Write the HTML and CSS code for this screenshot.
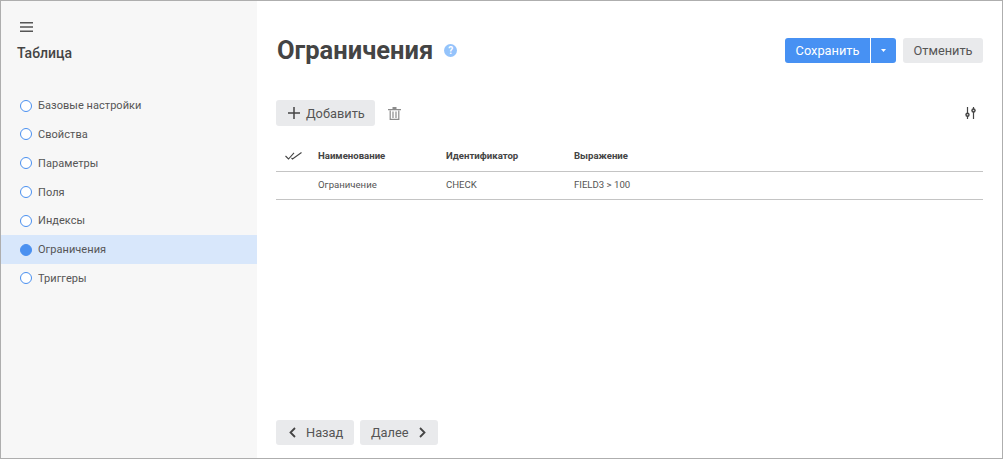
FILE: index.html
```html
<!DOCTYPE html>
<html lang="ru">
<head>
<meta charset="utf-8">
<title>Ограничения</title>
<link rel="stylesheet" href="styles.css">
</head>
<body>
<div class="window">
  <aside class="sidebar">
    <svg class="menu-icon" width="13" height="10" viewBox="0 0 13 10"><path d="M0 .7h13M0 5h13M0 9.300h13" stroke="#555" stroke-width="1.400" fill="none"/></svg>
    <div class="side-title">Таблица</div>
    <nav class="steps">
      <div class="step"><span class="dot"></span>Базовые настройки</div>
      <div class="step"><span class="dot"></span>Свойства</div>
      <div class="step"><span class="dot"></span>Параметры</div>
      <div class="step"><span class="dot"></span>Поля</div>
      <div class="step"><span class="dot"></span>Индексы</div>
      <div class="step active"><span class="dot"></span>Ограничения</div>
      <div class="step"><span class="dot"></span>Триггеры</div>
    </nav>
  </aside>
  <main class="content">
    <header class="head">
      <h1>Ограничения</h1>
      <span class="help">?</span>
      <div class="spacer"></div>
      <div class="split">
        <button class="btn primary save">Сохранить</button>
        <button class="btn primary caret"><svg width="5" height="3" viewBox="0 0 5 3"><path d="M0 0h5L2.500 3z" fill="#fff"/></svg></button>
      </div>
      <button class="btn cancel">Отменить</button>
    </header>
    <div class="toolbar">
      <button class="btn add"><svg width="12" height="12" viewBox="0 0 12 12"><path d="M6 0v12M0 6h12" stroke="#444" stroke-width="1.500" fill="none"/></svg>Добавить</button>
      <svg class="trash" width="13" height="13" viewBox="0 0 13 13"><path d="M0 2h13v1.300H0zM4.500 0h4v2h-4z" fill="#8c8c8c"/><path d="M2.200 3.500v8.900h8.600V3.500M5 4.500v6.500M8 4.500v6.500" stroke="#8c8c8c" stroke-width="1.200" fill="none"/></svg>
      <div class="spacer"></div>
      <svg class="sliders" width="11" height="12" viewBox="0 0 11 12"><path d="M2.500 0v12M8.500 0v12" stroke="#444" stroke-width="1.200" fill="none"/><circle cx="2.500" cy="7.800" r="2.200" fill="#444"/><circle cx="8.500" cy="3.500" r="2.200" fill="#444"/><circle cx="8.500" cy="3.500" r=".8" fill="#ddd"/><circle cx="2.500" cy="7.800" r=".8" fill="#ddd"/></svg>
    </div>
    <div class="table">
      <div class="row header">
        <div class="check"><svg width="17" height="8" viewBox="0 0 17 8"><path d="M.5 4l3 3L9 .8M6.500 6l1 1L16.500 .5" stroke="#444" stroke-width="1.100" fill="none"/></svg></div>
        <div class="col">Наименование</div>
        <div class="col">Идентификатор</div>
        <div class="col">Выражение</div>
      </div>
      <div class="row body">
        <div class="check"></div>
        <div class="col">Ограничение</div>
        <div class="col">CHECK</div>
        <div class="col">FIELD3 &gt; 100</div>
      </div>
    </div>
    <footer class="foot">
      <button class="btn nav back"><svg width="7" height="11" viewBox="0 0 7 11"><path d="M6 1L1.500 5.500 6 10" stroke="#444" stroke-width="1.800" fill="none"/></svg>Назад</button>
      <button class="btn nav next">Далее<svg width="7" height="11" viewBox="0 0 7 11"><path d="M1 1l4.500 4.500L1 10" stroke="#444" stroke-width="1.800" fill="none"/></svg></button>
    </footer>
  </main>
</div>
</body>
</html>
```
FILE: styles.css
```css
* { box-sizing: border-box; }
html, body { margin: 0; height: 100%; }
body { font-family: Roboto, "Liberation Sans", sans-serif; color: #444; overflow: hidden; }
.window { display: flex; width: 1003px; height: 459px; border: 1px solid #aeaeae; background: #fff; }
.sidebar { width: 256px; flex: none; background: #f7f7f7; padding-top: 21px; }
.menu-icon { display: block; margin-left: 19px; }
.side-title { margin: 12px 0 0 16px; font-size: 14px; line-height: 18px; font-weight: 500; }
.steps { margin-top: 29.300px; }
.step { display: flex; align-items: center; height: 28.8px; padding-left: 19px; font-size: 11px; letter-spacing: .05px; color: #555; }
.dot { width: 12px; height: 12px; margin-right: 6px; border-radius: 50%; border: 1.300px solid #4a90f0; background: #fff; flex: none; }
.step.active { background: #d8e7fb; }
.step.active .dot { background: #4a90f0; }
.content { flex: 1; display: flex; flex-direction: column; padding: 36px 19px 13px; min-width: 0; }
.head { display: flex; align-items: center; height: 26px; }
h1 { margin: 0 0 0 1px; font-size: 25.500px; line-height: 26px; font-weight: 700; color: #444; }
.help { width: 13px; height: 13px; margin-left: 11px; border-radius: 50%; background: #94c3fb; color: #fff; font-size: 10px; font-weight: 700; line-height: 13px; text-align: center; }
.spacer { flex: 1; }
.btn { height: 25px; border: 0; border-radius: 3px; background: #e9eaec; color: #555; font: 12.800px Roboto, "Liberation Sans", sans-serif; padding: 0; display: inline-flex; align-items: center; justify-content: center; }
.split { display: flex; gap: 1px; margin-right: 7px; }
.primary { background: #4791f3; color: #fff; }
.save { width: 85px; border-radius: 3px 0 0 3px; }
.caret { width: 25px; border-radius: 0 3px 3px 0; }
.cancel { width: 80px; }
.toolbar { display: flex; align-items: center; margin-top: 37px; height: 26px; }
.add { width: 99px; height: 26px; gap: 6px; justify-content: flex-start; padding-left: 12px; }
.trash { margin-left: 13px; }
.sliders { margin-right: 7px; }
.table { margin-top: 14px; font-size: 9.600px; }
.row { display: flex; align-items: center; border-bottom: 1px solid #c4c4c4; }
.row.header { height: 32px; font-weight: 700; color: #444; }
.row.body { height: 28px; padding-bottom: 2px; color: #555; }
.check { width: 42px; padding-left: 9px; display: flex; }
.col { width: 128px; }
.foot { margin-top: auto; display: flex; gap: 6px; }
.nav { width: 78px; height: 25px; gap: 10px; justify-content: flex-start; }
.back { padding-left: 13px; }
.next { padding-left: 11px; }
```
